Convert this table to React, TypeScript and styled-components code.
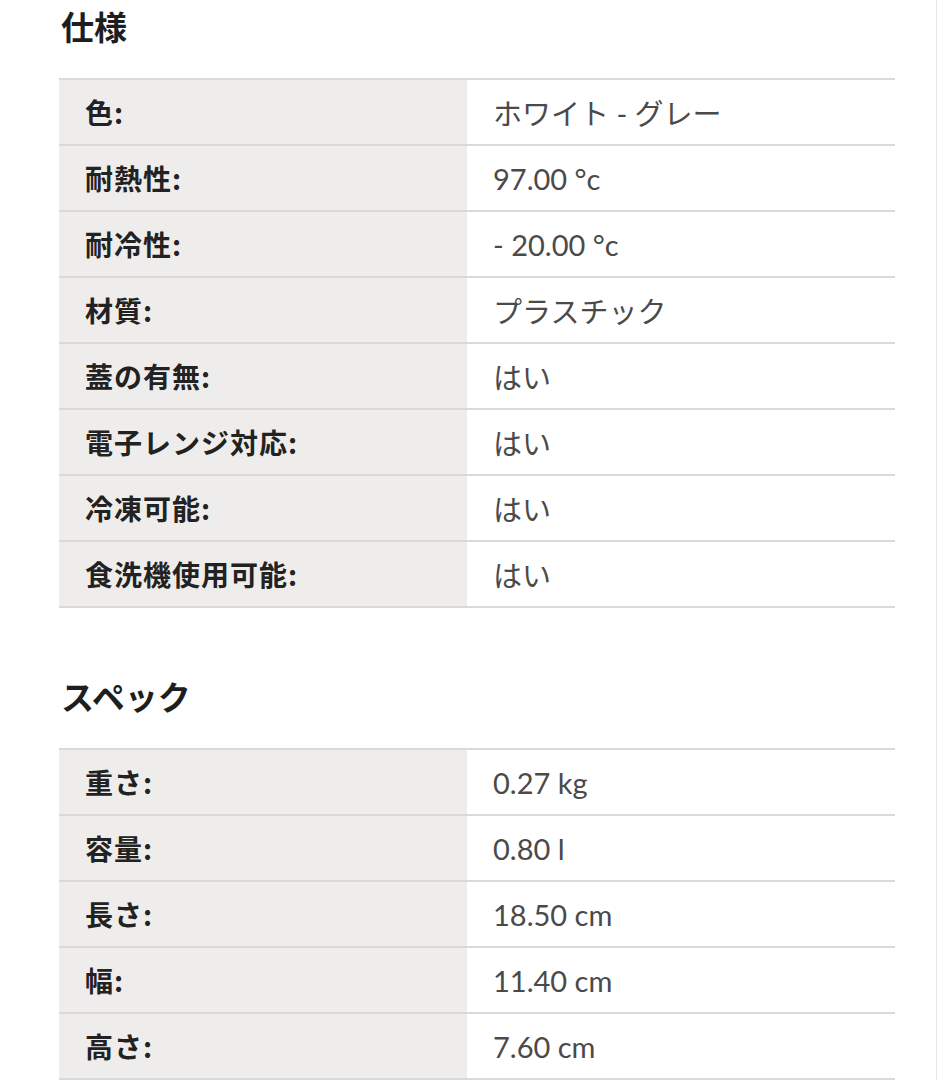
import React from 'react'
import styled, { createGlobalStyle } from 'styled-components'

const GlobalStyle = createGlobalStyle`
  html, body {
    margin: 0;
    padding: 0;
    background: #ffffff;
  }
  body {
    font-family: Lato, "Noto Sans CJK JP", sans-serif;
    color: #222222;
  }
`

const Page = styled.div`
  width: 937px;
  min-height: 1080px;
  box-sizing: border-box;
  border-right: 1px solid #e6e6e6;
  padding: 0 41px 0 59px;
`

const Section = styled.section`
  & + & {
    margin-top: 62px;
  }
`

const Heading = styled.h2`
  margin: 0 0 26px 2px;
  height: 52px;
  line-height: 52px;
  font-family: "Noto Sans CJK JP", sans-serif;
  font-size: 33px;
  font-weight: 700;
  color: #1e1e1e;
`

const Table = styled.div`
  display: grid;
  grid-template-columns: 408px 1fr;
  border-bottom: 2px solid #dadada;
`

const Cell = styled.div<{ $label?: boolean }>`
  height: 64px;
  border-top: 2px solid #dadada;
  display: flex;
  align-items: center;
  padding-left: 26px;
  background: ${({ $label }) => ($label ? '#efedeb' : '#ffffff')};
  font-family: ${({ $label }) =>
    $label
      ? '"Noto Sans CJK JP", sans-serif'
      : 'Lato, "Noto Sans CJK JP", sans-serif'};
  font-size: ${({ $label }) => ($label ? '28px' : '29px')};
  letter-spacing: ${({ $label }) => ($label ? '1px' : '0')};
  font-weight: ${({ $label }) => ($label ? 700 : 400)};
  color: ${({ $label }) => ($label ? '#222222' : '#4a4a4a')};
`

type Spec = { label: string; value: string }

const specs: Spec[] = [
  { label: '色:', value: 'ホワイト - グレー' },
  { label: '耐熱性:', value: '97.00 °c' },
  { label: '耐冷性:', value: '- 20.00 °c' },
  { label: '材質:', value: 'プラスチック' },
  { label: '蓋の有無:', value: 'はい' },
  { label: '電子レンジ対応:', value: 'はい' },
  { label: '冷凍可能:', value: 'はい' },
  { label: '食洗機使用可能:', value: 'はい' }
]

const dimensions: Spec[] = [
  { label: '重さ:', value: '0.27 kg' },
  { label: '容量:', value: '0.80 l' },
  { label: '長さ:', value: '18.50 cm' },
  { label: '幅:', value: '11.40 cm' },
  { label: '高さ:', value: '7.60 cm' }
]

const SpecTable: React.FC<{ rows: Spec[] }> = ({ rows }) => (
  <Table>
    {rows.map(({ label, value }) => (
      <React.Fragment key={label}>
        <Cell $label>{label}</Cell>
        <Cell>{value}</Cell>
      </React.Fragment>
    ))}
  </Table>
)

export default function App() {
  return (
    <>
      <GlobalStyle />
      <Page>
        <Section>
          <Heading>仕様</Heading>
          <SpecTable rows={specs} />
        </Section>
        <Section>
          <Heading>スペック</Heading>
          <SpecTable rows={dimensions} />
        </Section>
      </Page>
    </>
  )
}
